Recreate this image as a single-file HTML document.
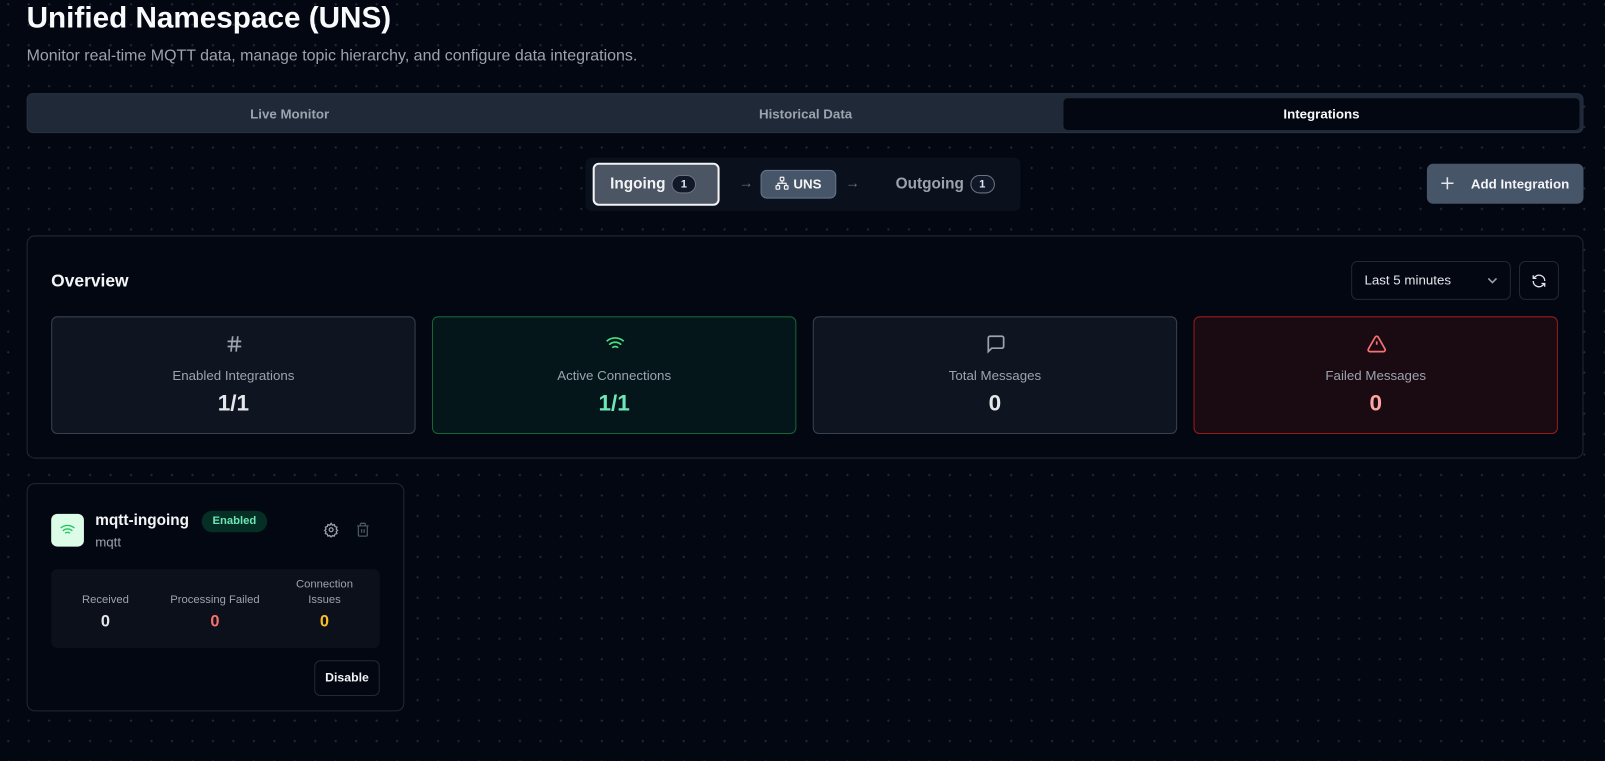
<!DOCTYPE html>
<html><head><meta charset="utf-8"><style>
*{box-sizing:border-box;margin:0;padding:0}
html,body{width:1605px;height:761px;overflow:hidden;background:#030712}
body{font-family:"Liberation Sans",sans-serif;color:#f3f4f6;position:relative;
background-image:radial-gradient(circle,#1f2937 1px,transparent 1.2px);background-size:20.47px 20.47px;background-position:-2px -6px}
#w{position:absolute;left:0;top:0;width:1568px;height:743px;transform:scale(1.0236);transform-origin:0 0}
.abs{position:absolute}
h1{position:absolute;left:26px;top:2px;font-size:29px;font-weight:700;color:#f9fafb}
.sub{left:26px;top:46px;font-size:15.6px;color:#9ca3af}
.tabs{left:26px;top:91px;width:1521px;height:39px;background:#1f2937;border-radius:6px;border:1px solid #273244}
.tab{position:absolute;top:4px;height:31px;line-height:31px;text-align:center;font-size:13px;font-weight:700;color:#9ca3af}
.flow{left:572px;top:154px;width:425px;height:52px;background:#0b111c;border-radius:6px}
.btn{position:absolute;border-radius:6px;font-weight:700}
.badge{display:inline-block;width:24px;height:18px;border-radius:9px;border:1px solid #6b7280;font-size:11px;text-align:center;line-height:16px;vertical-align:middle;margin-left:6px;color:#e5e7eb;background:#111827}
.panel{left:26px;top:230px;width:1521px;height:218px;border:1px solid #1f2937;border-radius:8px;background:#030712}
.stat{position:absolute;top:78px;width:356px;height:115px;border:1px solid #374151;border-radius:6px;background:#0e1520;text-align:center}
.stat .l{position:absolute;top:49px;width:100%;font-size:13px;color:#9ca3af}
.stat .v{position:absolute;top:71px;width:100%;font-size:22px;font-weight:700;color:#e5e7eb}
.stat svg{position:absolute;top:16px;left:168px}
.card{left:26px;top:472px;width:369px;height:223px;border:1px solid #1f2937;border-radius:8px;background:#030712}
.sv{position:absolute;top:43px;left:0;width:100%;font-size:16px;font-weight:700}
</style></head><body><div id="w">
<h1>Unified Namespace (UNS)</h1>
<div class="abs sub">Monitor real-time MQTT data, manage topic hierarchy, and configure data integrations.</div>
<div class="abs tabs">
 <div class="tab" style="left:4px;width:504px">Live Monitor</div>
 <div class="tab" style="left:508px;width:504px">Historical Data</div>
 <div class="tab" style="left:1012px;width:504px;background:#030712;color:#f9fafb;border-radius:4px">Integrations</div>
</div>
<div class="abs flow">
 <div class="btn" style="left:7px;top:5px;width:124px;height:42px;background:#4b5563;border:2px solid #f3f4f6;font-size:15px;line-height:38px;padding-left:15px">Ingoing<span class="badge">1</span></div>
 <div class="abs" style="left:150px;top:16px;color:#6b7280;font-size:14px">→</div>
 <div class="btn" style="left:171px;top:12px;width:74px;height:28px;background:#475569;border:1px solid #64748b;font-size:13px;line-height:26px;text-align:center">
 <svg width="14" height="14" viewBox="0 0 24 24" fill="none" stroke="#f3f4f6" stroke-width="2" style="vertical-align:-2px"><rect x="16" y="16" width="6" height="6" rx="1"/><rect x="2" y="16" width="6" height="6" rx="1"/><rect x="9" y="2" width="6" height="6" rx="1"/><path d="M5 16v-3a1 1 0 0 1 1-1h12a1 1 0 0 1 1 1v3M12 12V8"/></svg> UNS</div>
 <div class="abs" style="left:254px;top:16px;color:#6b7280;font-size:14px">→</div>
 <div class="abs" style="left:303px;top:17px;font-size:15px;font-weight:700;color:#9ca3af">Outgoing<span class="badge">1</span></div>
</div>
<div class="btn abs" style="left:1394px;top:160px;width:153px;height:39px;background:#475569;font-size:13px;line-height:39px;color:#f3f4f6"><svg style="position:absolute;left:14px;top:13px" width="12" height="12" viewBox="0 0 12 12" stroke="#e5e7eb" stroke-width="1.5"><path d="M6 0v12M0 6h12"/></svg><span style="position:absolute;left:43px">Add Integration</span></div>
<div class="abs panel">
 <div class="abs" style="left:23px;top:34px;font-size:17px;font-weight:700">Overview</div>
 <div class="abs" style="left:1293px;top:24px;width:156px;height:38px;border:1px solid #1f2937;border-radius:6px;font-size:13px;line-height:36px;padding-left:12px;color:#e5e7eb">Last 5 minutes<svg style="position:absolute;right:12px;top:14px" width="10" height="8" viewBox="0 0 10 8" fill="none" stroke="#9ca3af" stroke-width="1.5"><path d="M1 2l4 4 4-4"/></svg></div>
 <div class="abs" style="left:1457px;top:24px;width:39px;height:38px;border:1px solid #1f2937;border-radius:6px">
 <svg style="margin:11px" width="15" height="15" viewBox="0 0 24 24" fill="none" stroke="#e5e7eb" stroke-width="2"><path d="M21 12a9 9 0 0 0-15-6.7L3 8M3 3v5h5M3 12a9 9 0 0 0 15 6.7l3-2.7M21 21v-5h-5"/></svg></div>
 <div class="stat" style="left:23px"><svg width="20" height="20" viewBox="0 0 24 24" fill="none" stroke="#9ca3af" stroke-width="2"><path d="M4 9h16M4 15h16M10 3 8 21M16 3l-2 18"/></svg><div class="l">Enabled Integrations</div><div class="v">1/1</div></div>
 <div class="stat" style="left:395px;background:#04161a;border-color:#166534"><svg width="20" height="20" viewBox="0 0 24 24" fill="none" stroke="#4ade80" stroke-width="2"><path d="M12 20h.01M2 8.8a15 15 0 0 1 20 0M5 12.9a10 10 0 0 1 14 0M8.5 16.4a5 5 0 0 1 7 0"/></svg><div class="l">Active Connections</div><div class="v" style="color:#6ee7b7">1/1</div></div>
 <div class="stat" style="left:767px"><svg width="20" height="20" viewBox="0 0 24 24" fill="none" stroke="#9ca3af" stroke-width="2"><path d="M21 15a2 2 0 0 1-2 2H7l-4 4V5a2 2 0 0 1 2-2h14a2 2 0 0 1 2 2z"/></svg><div class="l">Total Messages</div><div class="v">0</div></div>
 <div class="stat" style="left:1139px;background:#1a0b12;border-color:#991b1b"><svg width="20" height="20" viewBox="0 0 24 24" fill="none" stroke="#f87171" stroke-width="2"><path d="m21.7 18-8-14a2 2 0 0 0-3.5 0l-8 14A2 2 0 0 0 4 21h16a2 2 0 0 0 1.7-3zM12 9v4M12 17h.01"/></svg><div class="l">Failed Messages</div><div class="v" style="color:#fca5a5">0</div></div>
</div>
<div class="abs card">
 <div class="abs" style="left:23px;top:29px;width:32px;height:32px;border-radius:6px;background:#dcfce7"><svg style="margin:8px" width="16" height="16" viewBox="0 0 24 24" fill="none" stroke="#22c55e" stroke-width="2"><path d="M12 20h.01M2 8.8a15 15 0 0 1 20 0M5 12.9a10 10 0 0 1 14 0M8.5 16.4a5 5 0 0 1 7 0"/></svg></div>
 <div class="abs" style="left:66px;top:27px;font-size:15px;font-weight:700">mqtt-ingoing</div>
 <div class="abs" style="left:170px;top:26px;width:64px;height:21px;border-radius:11px;background:#052e24;color:#6ee7b7;font-size:11px;font-weight:700;text-align:center;line-height:21px">Enabled</div>
 <div class="abs" style="left:66px;top:49px;font-size:13px;color:#9ca3af">mqtt</div>
 <svg class="abs" style="left:289px;top:37px" width="15" height="15" viewBox="0 0 24 24" fill="none" stroke="#9ca3af" stroke-width="2"><circle cx="12" cy="12" r="3"/><path d="M12 2l2 3 3-1 1 3 3 1-1 3 2 2-2 2 1 3-3 1-1 3-3-1-2 3-2-3-3 1-1-3-3-1 1-3-2-2 2-2-1-3 3-1 1-3 3 1z"/></svg>
 <svg class="abs" style="left:320px;top:37px" width="15" height="15" viewBox="0 0 24 24" fill="none" stroke="#4b5563" stroke-width="2"><path d="M3 6h18M19 6v14a2 2 0 0 1-2 2H7a2 2 0 0 1-2-2V6M8 6V4a2 2 0 0 1 2-2h4a2 2 0 0 1 2 2v2M10 11v6M14 11v6"/></svg>
 <div class="abs" style="left:23px;top:83px;width:321px;height:77px;border-radius:6px;background:#0b101a;font-size:11px;color:#9ca3af;text-align:center">
  <div class="abs" style="left:13px;top:24px;width:80px;height:60px">Received</div>
  <div class="abs" style="left:13px;top:0;width:80px;height:70px"><div class="sv" style="color:#e5e7eb">0</div></div>
  <div class="abs" style="left:110px;top:24px;width:100px">Processing Failed</div>
  <div class="abs" style="left:110px;top:0;width:100px;height:70px"><div class="sv" style="color:#f87171">0</div></div>
  <div class="abs" style="left:227px;top:8px;width:80px;line-height:15px">Connection<br>Issues</div>
  <div class="abs" style="left:227px;top:0;width:80px;height:70px"><div class="sv" style="color:#fbbf24">0</div></div>
 </div>
 <div class="abs" style="left:280px;top:172px;width:64px;height:35px;border:1px solid #1f2937;border-radius:6px;font-size:12px;font-weight:700;text-align:center;line-height:33px">Disable</div>
</div>
</div></body></html>
